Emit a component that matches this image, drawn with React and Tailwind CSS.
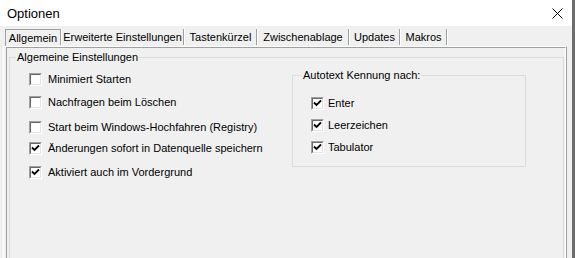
import React from "react";

function CheckBox({ checked }) {
  return (
    <div className="w-[13px] h-[13px] shrink-0 border border-t-[#a0a0a0] border-l-[#a0a0a0] border-b-white border-r-white">
      <div className="w-full h-full bg-white border border-t-[#696969] border-l-[#696969] border-b-[#e3e3e3] border-r-[#e3e3e3] flex items-center justify-center">
        {checked && (
          <svg width="9" height="9" viewBox="0 0 9 9" className="block">
            <path d="M1 3.5 L3.5 6 L8 1.5" stroke="#000" strokeWidth="1.8" fill="none" />
          </svg>
        )}
      </div>
    </div>
  );
}

function Row({ checked, label, className = "", textGap = "ml-[6px]" }) {
  return (
    <div className={"flex items-center h-[16px] " + className}>
      <CheckBox checked={checked} />
      <span className={"leading-[13px] whitespace-nowrap " + textGap}>{label}</span>
    </div>
  );
}

const tabs = [
  { label: "Allgemein", w: "w-[55px]", active: true },
  { label: "Erweiterte Einstellungen", w: "w-[121px]" },
  { label: "Tastenkürzel", w: "w-[71px]" },
  { label: "Zwischenablage", w: "w-[90px]" },
  { label: "Updates", w: "w-[49px]" },
  { label: "Makros", w: "w-[45px]" },
];

export default function App() {
  return (
    <div className="w-[575px] h-[258px] overflow-hidden flex bg-[#f0f0f0] text-black font-['Liberation_Sans',Arial,sans-serif] text-[11px]">
      <div className="w-[572px] flex flex-col">
        {/* title bar */}
        <div className="h-[26px] bg-white flex items-center pl-[7px] pr-[8px] shrink-0">
          <span className="text-[13px] leading-[15px]">Optionen</span>
          <div className="flex-1" />
          <svg width="11" height="11" viewBox="0 0 11 11" className="block mr-[1px]">
            <path d="M0.5 0.5 L10.5 10.5 M10.5 0.5 L0.5 10.5" stroke="#000" strokeWidth="1" fill="none" />
          </svg>
        </div>
        {/* tabs */}
        <div className="h-[20px] flex items-stretch pl-[5px] shrink-0">
          {tabs.map((t, i) => (
            <div key={i} className="flex items-stretch">
              <div
                className={
                  t.w +
                  " flex items-center justify-center whitespace-nowrap leading-[13px] mt-[3px] " +
                  (t.active ? "border-l border-t border-l-[#a0a0a0] border-t-[#a0a0a0]" : "")
                }
              >
                {t.label}
              </div>
              <div className="flex mt-[3px] mb-[1px]">
                <div className="w-[1px] bg-[#a0a0a0]" />
                <div className="w-[1px] bg-white" />
              </div>
            </div>
          ))}
        </div>
        {/* panel */}
        <div className="flex-1 ml-[3px] mr-[5px] border-l border-t border-r border-l-white border-t-white border-r-[#a0a0a0]">
          <div className="h-full ml-[2px] border-l border-t border-r border-l-[#a0a0a0] border-t-[#a0a0a0] border-r-white">
            <div className="h-full pl-[2px] pr-[1px] pt-[3px]">
              <fieldset className="border border-[#dcdcdc] h-[300px]">
                <legend className="ml-[6px] px-[1px] leading-[13px]">Algemeine Einstellungen</legend>
                <div className="flex pl-[19px]">
                  <div className="w-[263px] flex flex-col">
                    <Row label="Minimiert Starten" className="mt-[7px]" />
                    <Row label="Nachfragen beim Löschen" className="mt-[7px]" />
                    <Row label="Start beim Windows-Hochfahren (Registry)" className="mt-[9px]" />
                    <Row checked label="Änderungen sofort in Datenquelle speichern" className="mt-[5px]" />
                    <Row checked label="Aktiviert auch im Vordergrund" className="mt-[8px]" />
                  </div>
                  <fieldset className="w-[234px] border border-[#dcdcdc] mt-[5px] pb-[11px] self-start">
                    <legend className="ml-[9px] px-[1px] leading-[13px]">Autotext Kennung nach:</legend>
                    <div className="flex flex-col pl-[18px]">
                      <Row checked label="Enter" className="mt-[13px]" textGap="ml-[4px]" />
                      <Row checked label="Leerzeichen" className="mt-[6px]" textGap="ml-[4px]" />
                      <Row checked label="Tabulator" className="mt-[6px]" textGap="ml-[4px]" />
                    </div>
                  </fieldset>
                </div>
              </fieldset>
            </div>
          </div>
        </div>
      </div>
      <div className="w-[3px] bg-[#6d6d6d] shrink-0" />
    </div>
  );
}
